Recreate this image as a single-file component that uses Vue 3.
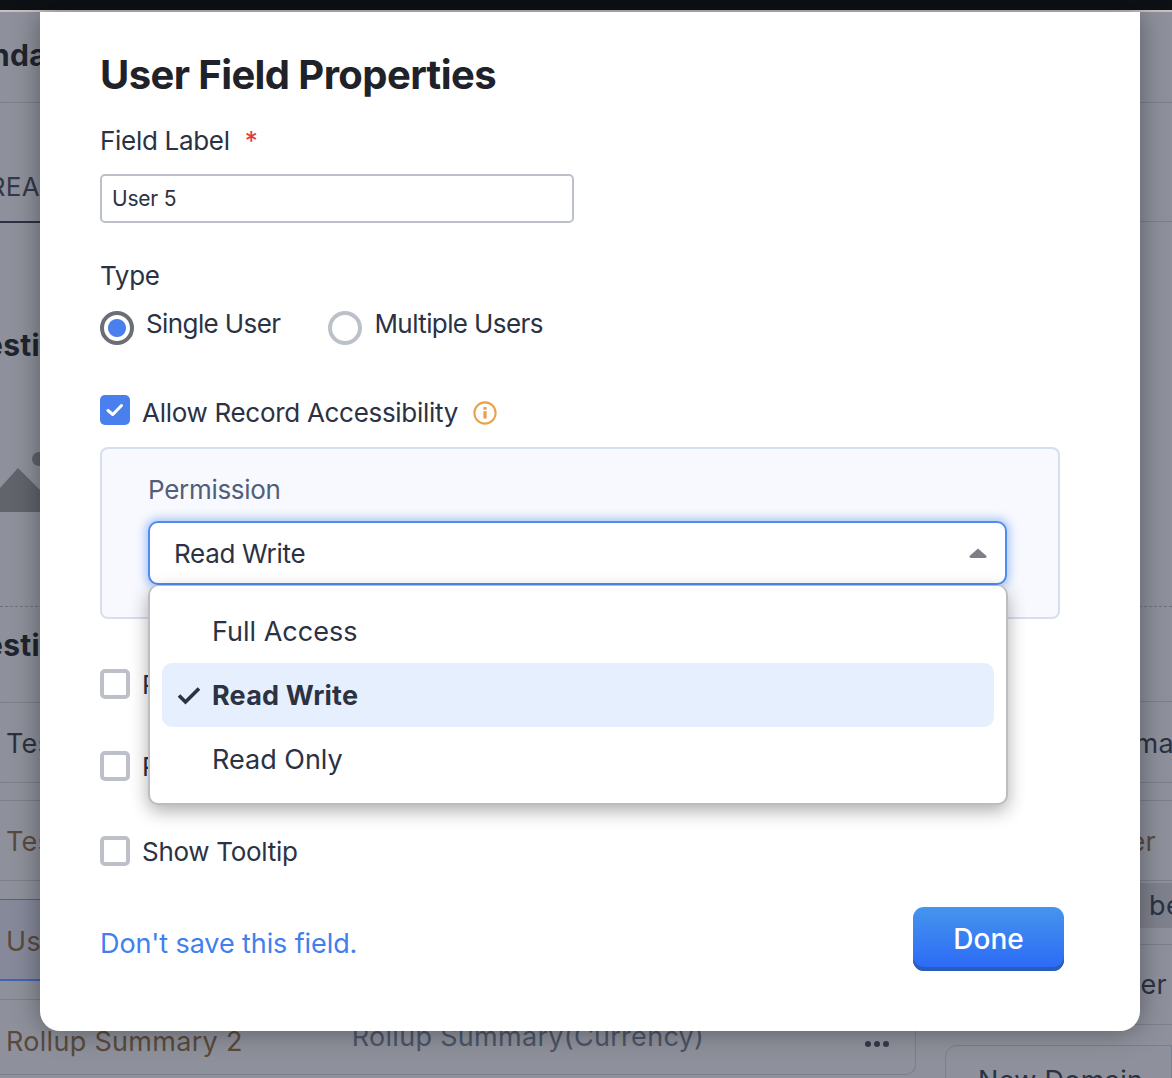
<script setup>
const options = [
  { label: 'Full Access', selected: false },
  { label: 'Read Write', selected: true },
  { label: 'Read Only', selected: false },
]
</script>

<template>
  <div class="page">
    <div class="band"></div>
    <div class="columns">
      <div class="col-left">
        <div class="row r-head"><span class="bold cut"><span class="shift">Standa</span></span></div>
        <div class="row r-tab"><span class="tab cut">AREA</span></div>
        <div class="r-section">
          <span class="bold cut">Questi</span>
          <div class="hill">
            <svg width="40" height="60" viewBox="0 0 40 60">
              <circle cx="39" cy="7" r="7" fill="#62646c" />
              <path d="M0 36 L18 16 L40 38 V60 H0 Z" fill="#62646c" />
            </svg>
          </div>
        </div>
        <div class="row r-q2"><span class="bold cut">Questi</span></div>
        <div class="row r-item"><span class="pad">Test</span></div>
        <div class="row r-gap"></div>
        <div class="row r-item"><span class="pad brown">Test</span></div>
        <div class="row r-gap2"></div>
        <div class="row r-active"><span class="pad brown">User</span></div>
        <div class="row r-gap3"></div>
        <div class="r-last">
          <span class="pad brown">Rollup Summary 2</span>
          <span class="last-type">Rollup Summary(Currency)</span>
          <span class="dots"><i></i><i></i><i></i></span>
        </div>
      </div>
      <div class="col-right">
        <div class="rr rr1"></div>
        <div class="rr rr2"></div>
        <div class="rr rr3"></div>
        <div class="rr rr3b"></div>
        <div class="rr rr4 end"><span class="push-a">Summa</span></div>
        <div class="rr rr5"></div>
        <div class="rr rr6 end brown"><span class="push-b">Owner</span></div>
        <div class="rr7 end"><span class="push-c">Will be</span></div>
        <div class="rr rr8"></div>
        <div class="rr rr9 end"><span class="push-d">Owner</span></div>
        <div class="rr10"></div>
        <div class="card-r"><span>New Domain</span></div>
      </div>
    </div>

    <section class="modal">
      <h1>User Field Properties</h1>
      <label class="field-label">Field Label <em>*</em></label>
      <div class="input">User 5</div>

      <div class="type-label">Type</div>
      <div class="radios">
        <div class="radio-item">
          <span class="radio on"></span>
          <span>Single User</span>
        </div>
        <div class="radio-item">
          <span class="radio"></span>
          <span>Multiple Users</span>
        </div>
      </div>

      <div class="allow">
        <span class="check on">
          <svg width="18" height="14" viewBox="0 0 18 14" fill="none">
            <path d="M2 7.5 L6.8 11.5 L15.5 2.5" stroke="#fff" stroke-width="3" stroke-linecap="round" stroke-linejoin="round" />
          </svg>
        </span>
        <span class="nudge">Allow Record Accessibility</span>
        <svg class="info" width="24" height="24" viewBox="0 0 26 26" fill="none">
          <circle cx="13" cy="13" r="11.5" stroke="#e8a24a" stroke-width="2.2" />
          <rect x="11.2" y="6.5" width="3.6" height="3" fill="#e8a24a" />
          <rect x="11.2" y="11" width="3.6" height="8" fill="#e8a24a" />
        </svg>
      </div>

      <div class="panel">
        <div class="perm-label">Permission</div>
        <div class="select">
          <span>Read Write</span>
          <svg width="18" height="10" viewBox="0 0 18 10">
            <path d="M9 0.5 L17.5 8 Q18 10 16 10 H2 Q0 10 0.5 8 Z" fill="#7d7f88" />
          </svg>
        </div>
      </div>

      <div class="check-row first"><span class="check"></span><span>Required</span></div>
      <div class="check-row second"><span class="check"></span><span>Read Only</span></div>
      <div class="check-row third"><span class="check"></span><span>Show Tooltip</span></div>

      <div class="footer">
        <a class="link">Don't save this field.</a>
        <button class="done">Done</button>
      </div>

      <ul class="menu">
        <li v-for="o in options" :key="o.label" :class="{ selected: o.selected }">
          <svg v-if="o.selected" class="tick" width="24" height="20" viewBox="0 0 24 20" fill="none">
            <path d="M2 10.5 L8.5 17 L22 3.5" stroke="#2b3243" stroke-width="3.6" />
          </svg>
          <span>{{ o.label }}</span>
        </li>
      </ul>
    </section>
  </div>
</template>

<style>
html, body { margin: 0; padding: 0; }
</style>

<style scoped>
* { box-sizing: border-box; }
.page {
  position: relative;
  width: 1172px;
  height: 1078px;
  overflow: hidden;
  background: #8e919b;
  font-family: Inter, "Noto Sans", sans-serif;
  font-size: 27px;
  color: #2b3243;
}
.band {
  height: 12px;
  background: #0d1116;
  border-bottom: 2px solid #c9bfc0;
}
.columns { display: flex; gap: 29px; height: 1066px; letter-spacing: 0.3px; }
.col-left { width: 916px; display: flex; flex-direction: column; }
.col-right { width: 227px; display: flex; flex-direction: column; flex: 1; }
.row { display: flex; align-items: center; border-bottom: 1px solid #7a7f8e; }
.bold { font-weight: 700; font-size: 30px; color: #20242e; }
.cut { width: 40px; display: flex; justify-content: flex-end; white-space: nowrap; overflow: hidden; }
.shift { margin-right: -7px; }
.pad { padding-left: 6px; white-space: nowrap; }
.brown { color: #5a4a3e; }
.r-head { height: 91px; padding-bottom: 4px; }
.r-tab { height: 120px; padding-top: 48px; border-bottom: 2px solid #2b3243; }
.tab { color: #33384a; font-size: 26px; }
.r-section { height: 384px; padding-top: 104px; border-bottom: 1px dashed #6f727c; display: flex; flex-direction: column; }
.hill { margin-top: 89px; }
.hill svg { display: block; }
.r-q2 { height: 96px; padding-bottom: 20px; }
.r-item { height: 80px; padding-top: 2px; }
.r-gap { height: 18px; }
.r-gap2 { height: 19px; border-bottom: 1px solid #3f63b8; }
.r-active { height: 81px; padding-top: 4px; background: #85899a; border-bottom: 2px solid #3f63b8; }
.r-gap3 { height: 19px; }
.r-last {
  flex: 1;
  display: flex;
  align-items: center;
  padding-top: 8px;
  border-right: 1px solid #7a7f8e;
  border-bottom: 1px solid #7a7f8e;
  border-bottom-right-radius: 10px;
  margin-bottom: 3px;
}
.last-type { margin-left: 109px; margin-top: -10px; color: #4c5468; white-space: nowrap; }
.dots { display: flex; gap: 3px; margin-left: 161px; margin-top: 6px; }
.dots i { width: 6px; height: 6px; border-radius: 50%; background: #343a4c; }
.rr { border-bottom: 1px solid #7a7f8e; flex: none; }
.end { display: flex; justify-content: flex-end; align-items: center; white-space: nowrap; }
.rr1 { height: 91px; }
.rr2 { height: 119px; }
.rr3 { height: 385px; border-bottom: 1px dashed #6f727c; }
.rr3b { height: 95px; }
.rr4 { height: 81px; padding-top: 2px; }
.rr5 { height: 18px; }
.rr6 { height: 80px; padding-top: 2px; }
.rr7 { height: 45px; margin-top: 2px; background: #7f828d; flex: none; }
.rr8 { height: 17px; }
.rr9 { height: 80px; }
.rr10 { height: 20px; flex: none; }
.push-a { margin-right: -2px; }
.push-b { margin-right: 16px; }
.push-c { margin-right: -10px; }
.push-d { margin-right: 5px; }
.card-r {
  flex: 1;
  border: 1px solid #7a7f8e;
  border-radius: 12px 0 0 0;
  padding: 18px 0 0 32px;
  white-space: nowrap;
}

.modal {
  position: absolute;
  left: 40px;
  top: 12px;
  width: 1100px;
  height: 1019px;
  padding: 36px 60px 0;
  background: #fff;
  border-radius: 0 0 20px 20px;
  box-shadow: 0 0 28px rgba(0, 0, 0, 0.38);
  font-size: 26px;
  letter-spacing: -0.3px;
}
h1 {
  margin: 0;
  font-size: 40px;
  line-height: 54px;
  font-weight: 700;
  color: #1f2228;
  letter-spacing: -0.6px;
}
.field-label { display: block; margin-top: 20px; line-height: 38px; }
.field-label em { color: #e0393e; font-style: normal; margin-left: 8px; }
.input {
  width: 474px;
  height: 49px;
  margin-top: 14px;
  padding-left: 10px;
  border: 2px solid #bcc1c9;
  border-radius: 5px;
  font-size: 21px;
  letter-spacing: -0.2px;
  line-height: 45px;
}
.type-label { margin-top: 34px; line-height: 38px; }
.radios { display: flex; gap: 48px; margin-top: 11px; height: 42px; letter-spacing: -0.6px; }
.radio-item { display: flex; gap: 12px; line-height: 36px; }
.radio {
  width: 34px;
  height: 34px;
  margin-top: 5px;
  border: 4px solid #bcc1c9;
  border-radius: 50%;
  background: #fff;
  flex: none;
}
.radio.on {
  border-color: #6b6e77;
  background: radial-gradient(circle, #4a80ee 0 8.5px, #fff 9.5px);
}
.allow { display: flex; align-items: center; gap: 12px; margin-top: 47px; height: 30px; }
.nudge { margin-top: 4px; }
.check {
  width: 30px;
  height: 30px;
  border: 4px solid #bcc1c9;
  border-radius: 5px;
  background: #fff;
  flex: none;
  display: flex;
  align-items: center;
  justify-content: center;
}
.check.on { background: #4a80ee; border: none; }
.info { margin-left: 3px; margin-top: 5px; }
.panel {
  margin-top: 22px;
  width: 960px;
  height: 172px;
  padding: 22px 46px 0;
  background: #f7f9fe;
  border: 2px solid #d5e0ec;
  border-radius: 8px;
}
.perm-label { color: #525d79; line-height: 38px; }
.select {
  margin-top: 12px;
  width: 859px;
  height: 64px;
  padding: 0 18px 0 24px;
  display: flex;
  align-items: center;
  justify-content: space-between;
  background: #fff;
  border: 2px solid #528bf0;
  border-radius: 10px;
  box-shadow: 0 0 9px 3px rgba(82, 139, 240, 0.45);
}
.check-row { display: flex; align-items: center; gap: 12px; height: 30px; }
.first { margin-top: 50px; }
.second { margin-top: 52px; }
.third { margin-top: 55px; }
.footer { display: flex; justify-content: space-between; align-items: flex-start; margin-top: 41px; width: 964px; }
.link { color: #3f7fee; font-size: 27px; letter-spacing: -0.1px; line-height: 38px; margin-top: 18px; }
.done {
  width: 151px;
  height: 64px;
  margin: 0;
  padding: 0;
  border: none;
  border-radius: 11px;
  background: linear-gradient(#4595ee, #2b68f6);
  box-shadow: inset 0 -4px 0 #2a5bbf;
  color: #fff;
  font-family: inherit;
  font-size: 28px;
  font-weight: 500;
}
.menu {
  position: absolute;
  left: 108px;
  top: 573px;
  width: 860px;
  height: 220px;
  margin: 0;
  padding: 13px;
  list-style: none;
  background: #fff;
  border: 2px solid #bdbdbd;
  border-top-width: 1px;
  border-radius: 10px;
  box-shadow: 0 6px 18px rgba(0, 0, 0, 0.32);
  font-size: 27px;
  letter-spacing: 0;
}
.menu li {
  display: flex;
  align-items: center;
  height: 64px;
  margin-left: -1px;
  margin-right: -1px;
  padding-left: 50px;
  position: relative;
  border-radius: 10px;
}
.menu li.selected { background: #e5effd; font-weight: 700; letter-spacing: 0.2px; }
.tick { position: absolute; left: 15px; top: 22px; }
</style>
